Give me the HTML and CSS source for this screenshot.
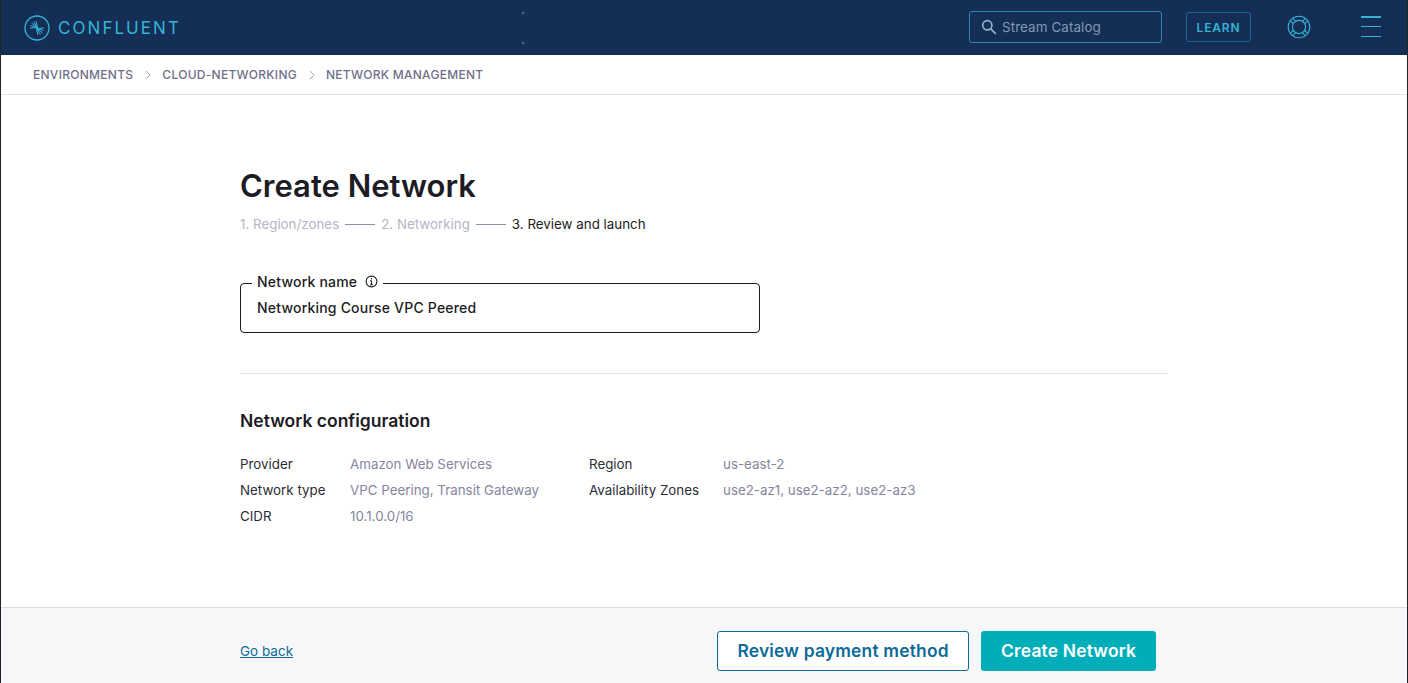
FILE: index.html
```html
<!DOCTYPE html>
<html lang="en">
<head>
<meta charset="utf-8">
<title>Create Network</title>
<link rel="stylesheet" href="styles.css">
</head>
<body>
<div class="app">
  <header class="topbar">
    <a class="logo">
      <svg class="logo-mark" width="26" height="26" viewBox="0 0 26 26" fill="none" stroke="#35b3d6">
        <circle cx="13" cy="13" r="12" stroke-width="1.300"/>
        <path stroke-width="1" d="M13.500 12.500 12 6M13.500 12.500 9.500 6.500M13.500 12.500 7.500 8M13.500 12.500 6.500 10.500M13.500 12.500 6 13M12.500 13.500 14 20M12.500 13.500l4 6M12.500 13.500l6 4.500M12.500 13.500l7 2M12.500 13.500 20 13"/>
      </svg>
      <span class="logo-text">CONFLUENT</span>
    </a>
    <div class="topbar-ghost"><i></i><i></i></div>
    <div class="search">
      <svg width="16" height="16" viewBox="0 0 16 16" fill="none" stroke="#8fb4c9" stroke-width="1.700">
        <circle cx="6.300" cy="6.300" r="4.600"/>
        <path d="m9.800 9.800 5 5"/>
      </svg>
      <span>Stream Catalog</span>
    </div>
    <button class="learn">LEARN</button>
    <svg class="lifebuoy" width="24" height="24" viewBox="0 0 24 24" fill="none" stroke="#35b3d6" stroke-width="1.100">
      <circle cx="12" cy="12" r="10.800"/>
      <circle cx="12" cy="12" r="6.600"/>
      <path d="M6.200 3.800 9 6.800M3.800 6.200 6.800 9M17.800 3.800 15 6.800M20.200 6.200 17.200 9M6.200 20.200 9 17.200M3.800 17.800 6.800 15M17.800 20.200 15 17.200M20.200 17.800 17.200 15"/>
    </svg>
    <div class="menu"><i></i><i></i><i></i></div>
  </header>

  <nav class="crumbs">
    <span>ENVIRONMENTS</span>
    <svg width="6" height="10" viewBox="0 0 6 10" fill="none" stroke="#a3a3b5" stroke-width="1"><path d="m1 1 4 4-4 4"/></svg>
    <span>CLOUD-NETWORKING</span>
    <svg width="6" height="10" viewBox="0 0 6 10" fill="none" stroke="#a3a3b5" stroke-width="1"><path d="m1 1 4 4-4 4"/></svg>
    <span>NETWORK MANAGEMENT</span>
  </nav>

  <main class="content">
    <h1>Create Network</h1>
    <ol class="steps">
      <li>1. Region/zones</li>
      <li class="dash"></li>
      <li>2. Networking</li>
      <li class="dash"></li>
      <li class="current">3. Review and launch</li>
    </ol>

    <div class="field">
      <label class="field-label">Network name
        <svg width="13" height="13" viewBox="0 0 13 13" fill="none" stroke="#1f1f28" stroke-width="1.100"><circle cx="6.500" cy="6.500" r="5.400"/><path d="M6.500 5.800V9.800M5 5.800h1.500M5 9.800h3"/><path d="M6.500 3v1.400"/></svg>
      </label>
      <div class="field-value">Networking Course VPC Peered</div>
    </div>

    <hr class="rule">

    <h2>Network configuration</h2>
    <div class="config">
      <dl class="config-col left">
        <dt>Provider</dt><dd>Amazon Web Services</dd>
        <dt>Network type</dt><dd>VPC Peering, Transit Gateway</dd>
        <dt>CIDR</dt><dd>10.1.0.0/16</dd>
      </dl>
      <dl class="config-col right">
        <dt>Region</dt><dd>us-east-2</dd>
        <dt>Availability Zones</dt><dd>use2-az1, use2-az2, use2-az3</dd>
      </dl>
    </div>
  </main>

  <footer class="footer">
    <a class="back">Go back</a>
    <div class="actions">
      <button class="btn btn-outline">Review payment method</button>
      <button class="btn btn-solid">Create Network</button>
    </div>
  </footer>
</div>
</body>
</html>
```
FILE: styles.css
```css
* { box-sizing: border-box; }
html, body { margin: 0; height: 100%; }
body { font-family: Inter, "Liberation Sans", sans-serif; color: #1c1c24; background: #fff; overflow: hidden; }

.app {
  height: 683px;
  display: flex;
  flex-direction: column;
  border-left: 1px solid #23232b;
  border-right: 1px solid #23232b;
}

.topbar {
  height: 55px;
  flex: none;
  background: #152e55;
  display: flex;
  align-items: center;
  padding-left: 23px;
}
.logo { display: flex; align-items: center; gap: 8px; }
.logo-mark { display: block; }
.logo-text {
  font-family: Inter, sans-serif;
  font-weight: 400;
  font-size: 17px;
  letter-spacing: 2.050px;
  color: #35b3d6;
}
.topbar-ghost {
  width: 5px;
  height: 32px;
  margin-left: 341px;
  display: flex;
  flex-direction: column;
  justify-content: space-between;
}
.topbar-ghost i { display: block; width: 3px; height: 3px; border-left: 1px solid #2f6f8f; border-top: 1px solid #2f6f8f; }
.topbar-ghost i:last-child { border-top: 0; border-bottom: 1px solid #2f6f8f; }

.search {
  width: 193px;
  height: 32px;
  margin-left: 442px;
  margin-top: -1px;
  border: 1px solid #2d86ad;
  border-radius: 3px;
  display: flex;
  align-items: center;
  gap: 5px;
  padding-left: 11px;
  font-size: 13.400px;
  letter-spacing: 0.1px;
  color: #7f9bb3;
}
.learn {
  width: 65px;
  height: 30px;
  margin-left: 24px;
  margin-top: -1px;
  padding: 0;
  border: 1px solid #17688f;
  border-radius: 3px;
  background: transparent;
  font-family: inherit;
  font-size: 12px;
  font-weight: 600;
  letter-spacing: 0.8px;
  color: #35b3d6;
}
.lifebuoy { margin-left: 36px; margin-top: -1px; }
.menu {
  width: 20px;
  height: 21px;
  margin-left: 50px;
  margin-top: -2px;
  display: flex;
  flex-direction: column;
  justify-content: space-between;
}
.menu i { display: block; height: 1.500px; background: #35b3d6; }

.crumbs {
  height: 40px;
  flex: none;
  padding-left: 32px;
  border-bottom: 1px solid #e2e2ea;
  display: flex;
  align-items: center;
  gap: 11.500px;
  font-size: 12px;
  font-weight: 500;
  letter-spacing: 0.280px;
  color: #6f6f8a;
}

.content {
  flex: 1;
  padding: 70px 0 0 239px;
  width: 1167px;
}
h1 {
  margin: 0;
  font-size: 31px;
  line-height: 42px;
  font-weight: 600;
  color: #1c1c24;
}
.steps {
  list-style: none;
  margin: 7px 0 0;
  padding: 0;
  height: 20px;
  display: flex;
  align-items: center;
  gap: 6px;
  font-size: 13.350px;
  color: #b5b5c4;
}
.steps .dash { width: 30px; height: 1px; background: #8f8fa3; }
.steps .current { color: #1c1c24; }

.field {
  position: relative;
  width: 520px;
  height: 50px;
  margin-top: 49px;
  border: 1px solid #1c1c24;
  border-radius: 4px;
  padding: 15px 16px 0;
  font-size: 14px;
  font-weight: 500;
  letter-spacing: 0.2px;
  line-height: 17px;
}
.field-label {
  position: absolute;
  left: 11px;
  top: -11px;
  padding: 0 5px;
  background: #fff;
  display: flex;
  align-items: center;
  gap: 8px;
  line-height: 17px;
}
.rule {
  width: 928px;
  height: 1px;
  margin: 40px 0 0;
  border: 0;
  background: #e2e2ea;
}
h2 {
  margin: 36px 0 0;
  font-size: 17.500px;
  line-height: 22px;
  font-weight: 600;
}
.config { display: flex; margin-top: 19px; font-size: 13.350px; line-height: 26px; }
.config-col { margin: 0; display: grid; }
.config-col.left { grid-template-columns: 110px 239px; }
.config-col.right { grid-template-columns: 134px auto; align-content: start; }
.config-col dt { color: #2c2c36; }
.config-col dd { margin: 0; color: #8585a0; }

.footer {
  height: 76px;
  flex: none;
  padding-left: 239px;
  background: #f7f7fa;
  border-top: 1px solid #dcdce2;
  display: flex;
  align-items: center;
  padding-top: 11px;
}
.back { font-size: 13.500px; color: #0e6a97; text-decoration: underline; }
.actions { display: flex; gap: 12px; margin-left: 424px; }
.btn {
  height: 40px;
  padding: 0 0 1px;
  border-radius: 3px;
  font-family: inherit;
  font-size: 17.400px;
  font-weight: 600;
  letter-spacing: 0.2px;
  white-space: nowrap;
}
.btn-outline { width: 252px; background: #fff; border: 1px solid #0e6a97; color: #0e6a97; }
.btn-solid { width: 175px; background: #00aeba; border: 0; color: #fff; }
```
